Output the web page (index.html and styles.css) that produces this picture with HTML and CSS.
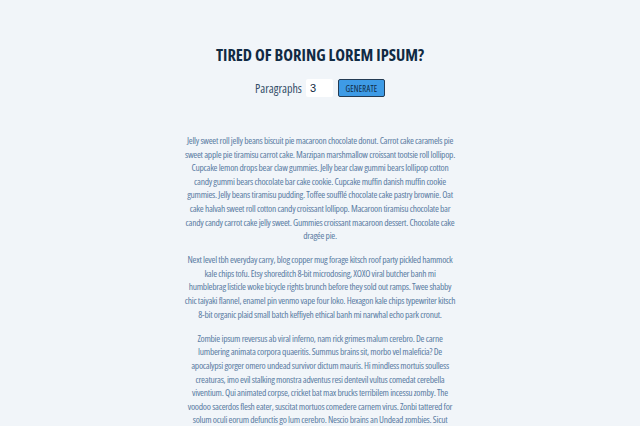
FILE: index.html
```html
<!DOCTYPE html>
<html>
<head>
<meta charset="utf-8">
<link rel="stylesheet" href="styles.css">
</head>
<body>
<main class="page">
  <h1 class="title">TIRED OF BORING LOREM IPSUM?</h1>
  <form class="controls">
    <label class="label" for="amount">Paragraphs</label>
    <input class="amount" id="amount" type="number" value="3">
    <button class="btn" type="button">GENERATE</button>
  </form>
  <article class="text">
    <p>Jelly sweet roll jelly beans biscuit pie macaroon chocolate donut. Carrot cake caramels pie sweet apple pie tiramisu carrot cake. Marzipan marshmallow croissant tootsie roll lollipop. Cupcake lemon drops bear claw gummies. Jelly bear claw gummi bears lollipop cotton candy gummi bears chocolate bar cake cookie. Cupcake muffin danish muffin cookie gummies. Jelly beans tiramisu pudding. Toffee soufflé chocolate cake pastry brownie. Oat cake halvah sweet roll cotton candy croissant lollipop. Macaroon tiramisu chocolate bar candy candy carrot cake jelly sweet. Gummies croissant macaroon dessert. Chocolate cake dragée pie.</p>
    <p>Next level tbh everyday carry, blog copper mug forage kitsch roof party pickled hammock kale chips tofu. Etsy shoreditch 8-bit microdosing, XOXO viral butcher banh mi<br>humblebrag listicle woke bicycle rights brunch before they sold out ramps. Twee shabby chic taiyaki flannel, enamel pin venmo vape four loko. Hexagon kale chips typewriter kitsch 8-bit organic plaid small batch keffiyeh ethical banh mi narwhal echo park cronut.</p>
    <p>Zombie ipsum reversus ab viral inferno, nam rick grimes malum cerebro. De carne lumbering animata corpora quaeritis. Summus brains sit, morbo vel maleficia? De apocalypsi gorger omero undead survivor dictum mauris. Hi mindless mortuis soulless creaturas, imo evil stalking monstra adventus resi dentevil vultus comedat cerebella viventium. Qui animated corpse, cricket bat max brucks terribilem incessu zomby. The voodoo sacerdos flesh eater, suscitat mortuos comedere carnem virus. Zonbi tattered for solum oculi eorum defunctis go lum cerebro. Nescio brains an Undead zombies. Sicut malus putrid voodoo horror. Nigh tofth eliv ingdead.</p>
  </article>
</main>
</body>
</html>
```
FILE: styles.css
```css
html, body {
  margin: 0;
  padding: 0;
}
body {
  background: #f1f5f9;
  font-family: "Open Sans", "Noto Sans", sans-serif;
  font-stretch: 75%;
  color: #102a43;
  height: 426px;
  overflow: hidden;
}
.page {
  display: flex;
  flex-direction: column;
  align-items: center;
  padding-top: 43px;
}
.title {
  margin: 0;
  font-size: 16.5px;
  font-weight: 700;
  letter-spacing: 0;
  line-height: 24px;
  color: #102a43;
}
.controls {
  display: flex;
  align-items: center;
  margin-top: 12px;
  height: 18px;
}
.label {
  font-size: 12px;
  color: #334e68;
  margin-right: 4px;
}
.amount {
  width: 27px;
  height: 18px;
  box-sizing: border-box;
  border: none;
  background: #fff;
  padding: 0 4px;
  font-family: "Liberation Sans", sans-serif;
  font-size: 11px;
  color: #102a43;
  border-radius: 2px;
  -moz-appearance: textfield;
}
.amount::-webkit-inner-spin-button,
.amount::-webkit-outer-spin-button {
  -webkit-appearance: none;
  margin: 0;
}
.btn {
  margin-left: 5px;
  width: 47px;
  height: 18px;
  box-sizing: border-box;
  background: #3e9be6;
  border: 1px solid #243b53;
  border-radius: 2px;
  font-family: "Open Sans", sans-serif;
  font-stretch: 75%;
  font-size: 8.5px;
  letter-spacing: 0.2px;
  color: #102a43;
  padding: 0;
}
.text {
  width: 273px;
  margin-top: 37px;
  text-align: center;
  font-size: 9.5px;
  letter-spacing: -0.28px;
  line-height: 13.6px;
  color: #5a7ca3;
}
.text p {
  margin: 0 0 10.5px;
}
```
